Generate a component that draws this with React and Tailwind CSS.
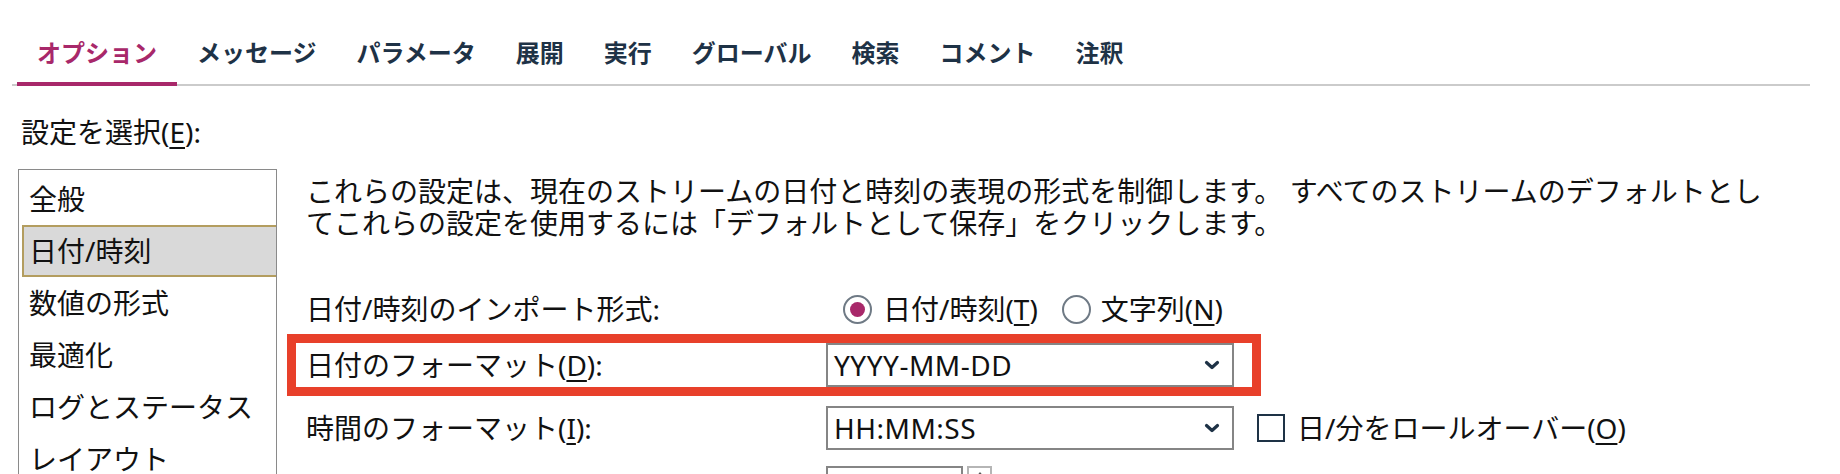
import React from 'react';

const tabs = ['オプション', 'メッセージ', 'パラメータ', '展開', '実行', 'グローバル', '検索', 'コメント', '注釈'];
const items = ['全般', '日付/時刻', '数値の形式', '最適化', 'ログとステータス', 'レイアウト'];

const Chevron = () => (
  <svg width="16" height="10" viewBox="0 0 16 10" className="shrink-0">
    <path d="M2.5 2.5 L8 7.5 L13.5 2.5" fill="none" stroke="#1e3246" strokeWidth="3.2" strokeLinecap="round" strokeLinejoin="round" />
  </svg>
);

const Select = ({ value }) => (
  <div className="w-[408px] h-[44px] border-2 border-[#858585] bg-white flex items-center justify-between pl-[6px] pr-[12px]">
    <span className="text-[28px] leading-[32px] tracking-[0.5px] text-[#111]">{value}</span>
    <Chevron />
  </div>
);

const Radio = ({ checked }) => (
  <span className="w-[29px] h-[29px] rounded-full border-2 border-[#6f7a85] flex items-center justify-center shrink-0">
    {checked && <span className="w-[15px] h-[15px] rounded-full bg-[#a8286a]" />}
  </span>
);

export default function App() {
  return (
    <div
      className="w-[1840px] h-[474px] overflow-hidden bg-white text-[#111]"
      style={{ fontFamily: '"Noto Sans", "Noto Sans CJK JP", sans-serif' }}
    >
      {/* tab strip */}
      <div className="ml-[12px] w-[1798px] flex border-b-2 border-[#cbcbcb] pl-[5px]">
        {tabs.map((t, i) => (
          <div
            key={t}
            className={`px-[20px] pt-[37px] text-[24px] leading-[30px] font-bold ${
              i === 0 ? 'text-[#a8286a] border-b-4 border-[#a8286a] -mb-[2px] pb-[15px]' : 'text-[#1e3246] pb-[17px]'
            }`}
            style={{ fontFamily: '"Noto Sans CJK JP", sans-serif' }}
          >
            {t}
          </div>
        ))}
      </div>

      <div className="pl-[21px] mt-[29px] text-[28px] leading-[34px]">
        設定を選択(<span className="underline underline-offset-4">E</span>):
      </div>

      <div className="flex mt-[20px]">
        {/* category list */}
        <div className="ml-[18px] w-[259px] h-[320px] border border-b-0 border-[#8a8a8a] pt-[3px] shrink-0">
          {items.map((it, i) =>
            i === 1 ? (
              <div key={it} className="ml-[3px] h-[52px] flex items-center pl-[5px] bg-[#d9d9d9] border-2 border-r-0 border-[#b39d5f] text-[28px]">
                {it}
              </div>
            ) : (
              <div key={it} className="h-[52px] flex items-center pl-[10px] text-[28px]">
                {it}
              </div>
            )
          )}
        </div>

        {/* settings panel */}
        <div className="ml-[10px] flex flex-col min-w-0">
          <div className="pl-[19px] pt-[6px] text-[28px] leading-[32px]">
            <p className="whitespace-nowrap">
              これらの設定は、現在のストリームの日付と時刻の表現の形式を制御します。 すべてのストリームのデフォルトとし
            </p>
            <p className="whitespace-nowrap">てこれらの設定を使用するには「デフォルトとして保存」をクリックします。</p>
          </div>

          <div className="mt-[45px] h-[50px] flex items-center">
            <div className="w-[539px] pl-[19px] text-[28px]">日付/時刻のインポート形式:</div>
            <div className="flex items-center pl-[17px] text-[28px]">
              <Radio checked />
              <span className="ml-[11px]">日付/時刻(<span className="underline underline-offset-4">T</span>)</span>
              <span className="ml-[24px]"><Radio /></span>
              <span className="ml-[10px]">文字列(<span className="underline underline-offset-4">N</span>)</span>
            </div>
          </div>

          <div className="w-[974px] border-[9px] border-[#e8402a] flex items-center">
            <div className="w-[530px] pl-[10px] text-[28px]">
              日付のフォーマット(<span className="underline underline-offset-4">D</span>):
            </div>
            <Select value="YYYY-MM-DD" />
          </div>

          <div className="mt-[10px] flex items-center">
            <div className="w-[539px] pl-[19px] text-[28px]">
              時間のフォーマット(<span className="underline underline-offset-4">I</span>):
            </div>
            <Select value="HH:MM:SS" />
            <span className="ml-[23px] w-[28px] h-[28px] border-2 border-[#1e3246] shrink-0" />
            <span className="ml-[12px] text-[28px]">
              日/分をロールオーバー(<span className="underline underline-offset-4">O</span>)
            </span>
          </div>

          <div className="mt-[16px] flex">
            <div className="w-[539px]" />
            <div className="w-[137px] h-[44px] border-2 border-[#858585]" />
            <div className="ml-[4px] w-[25px] h-[44px] border-2 border-[#b5b5b5] flex justify-center pt-[4px]">
              <span className="w-0 h-0 border-l-[4px] border-r-[4px] border-b-[5px] border-l-transparent border-r-transparent border-b-[#555]" />
            </div>
          </div>
        </div>
      </div>
    </div>
  );
}
